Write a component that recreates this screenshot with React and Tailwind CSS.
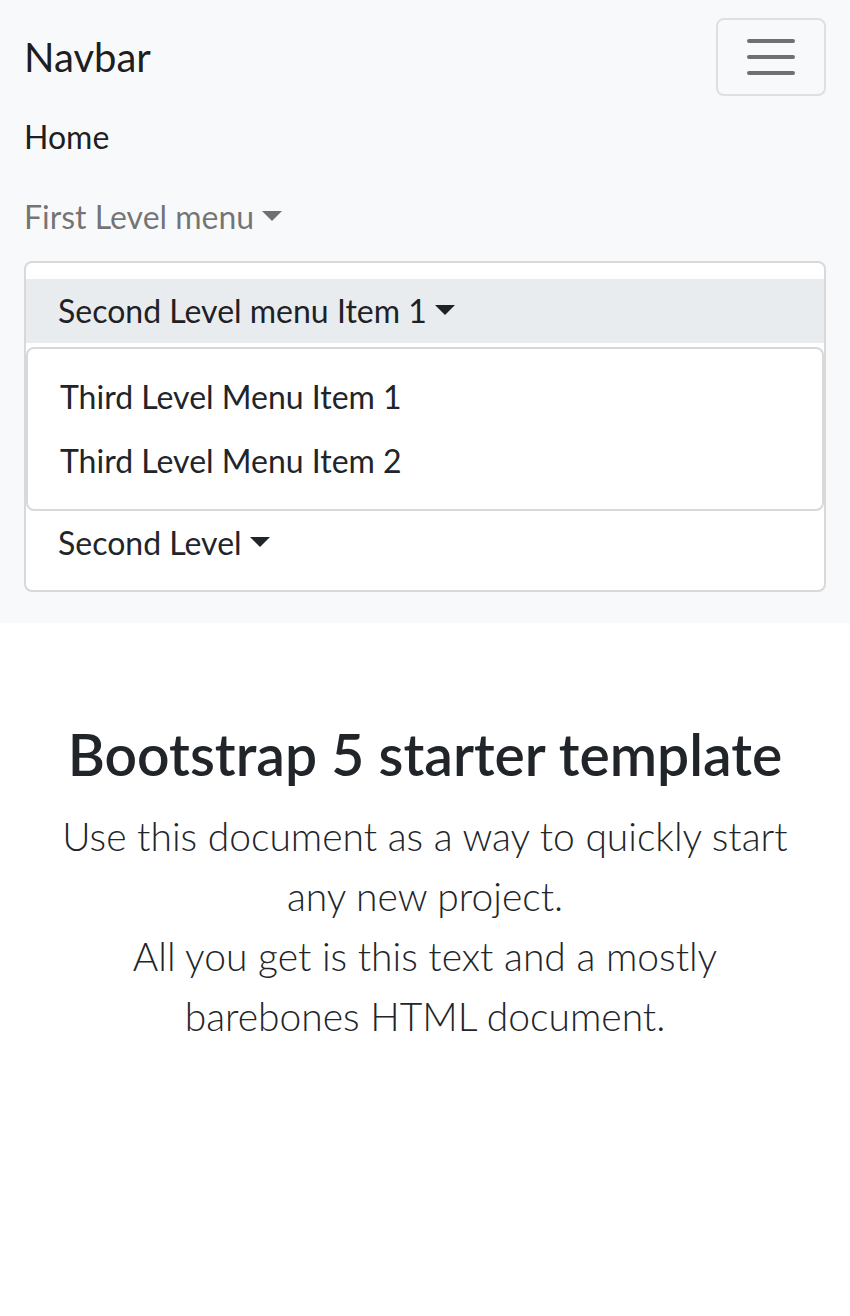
const font = { fontFamily: "Lato, 'Noto Sans', sans-serif" };

function Caret({ className = "" }) {
  return (
    <span
      className={`inline-block ml-[8px] align-[8px] w-0 h-0 border-t-[10px] border-x-[10px] border-x-transparent border-b-0 ${className}`}
    />
  );
}

function TogglerIcon() {
  return (
    <svg width="60" height="60" viewBox="0 0 30 30" aria-hidden="true">
      <path
        d="M4 7h22M4 15h22M4 23h22"
        stroke="rgba(0,0,0,0.55)"
        strokeWidth="2"
        strokeLinecap="round"
        strokeMiterlimit="10"
      />
    </svg>
  );
}

export default function App() {
  return (
    <div className="min-h-[1316px] bg-white text-[#212529]" style={font}>
      <nav className="bg-[#f8f9fa] py-4">
        <div className="px-6">
          <div className="flex items-center justify-between h-[81px]">
            <a className="text-[40px] leading-[60px] text-black/90">Navbar</a>
            <button className="w-[110px] h-[78px] border-2 border-black/10 rounded-[8px] flex items-center justify-center">
              <TogglerIcon />
            </button>
          </div>

          <ul className="flex flex-col mb-[15px] text-[32px] leading-[48px]">
            <li>
              <a className="block py-4 text-black/90">Home</a>
            </li>
            <li>
              <a className="block py-4 text-black/55">
                First Level menu
                <Caret className="border-t-black/55" />
              </a>
              <ul className="mt-[4px] bg-white border-2 border-black/15 rounded-[8px] pt-4 pb-[15px]">
                <li>
                  <a className="block px-8 py-2 bg-[#e9ecef] text-[#1e2125]">
                    Second Level menu Item 1
                    <Caret className="border-t-[#1e2125]" />
                  </a>
                  <ul className="mt-[4px] bg-white border-2 border-black/15 rounded-[8px] py-4">
                    <li>
                      <a className="block px-8 py-2">Third Level Menu Item 1</a>
                    </li>
                    <li>
                      <a className="block px-8 py-2">Third Level Menu Item 2</a>
                    </li>
                  </ul>
                </li>
                <li>
                  <a className="block px-8 py-2">
                    Second Level
                    <Caret className="border-t-[#212529]" />
                  </a>
                </li>
              </ul>
            </li>
          </ul>
        </div>
      </nav>

      <main className="px-6">
        <div className="mt-[97px] text-center">
          <h1 className="text-[57px] leading-[68px] font-semibold mb-[18px]">
            Bootstrap 5 starter template
          </h1>
          <p className="text-[39px] leading-[60px] font-light">
            Use this document as a way to quickly start
            <br />
            any new project.
            <br />
            All you get is this text and a mostly
            <br />
            barebones HTML document.
          </p>
        </div>
      </main>
    </div>
  );
}
